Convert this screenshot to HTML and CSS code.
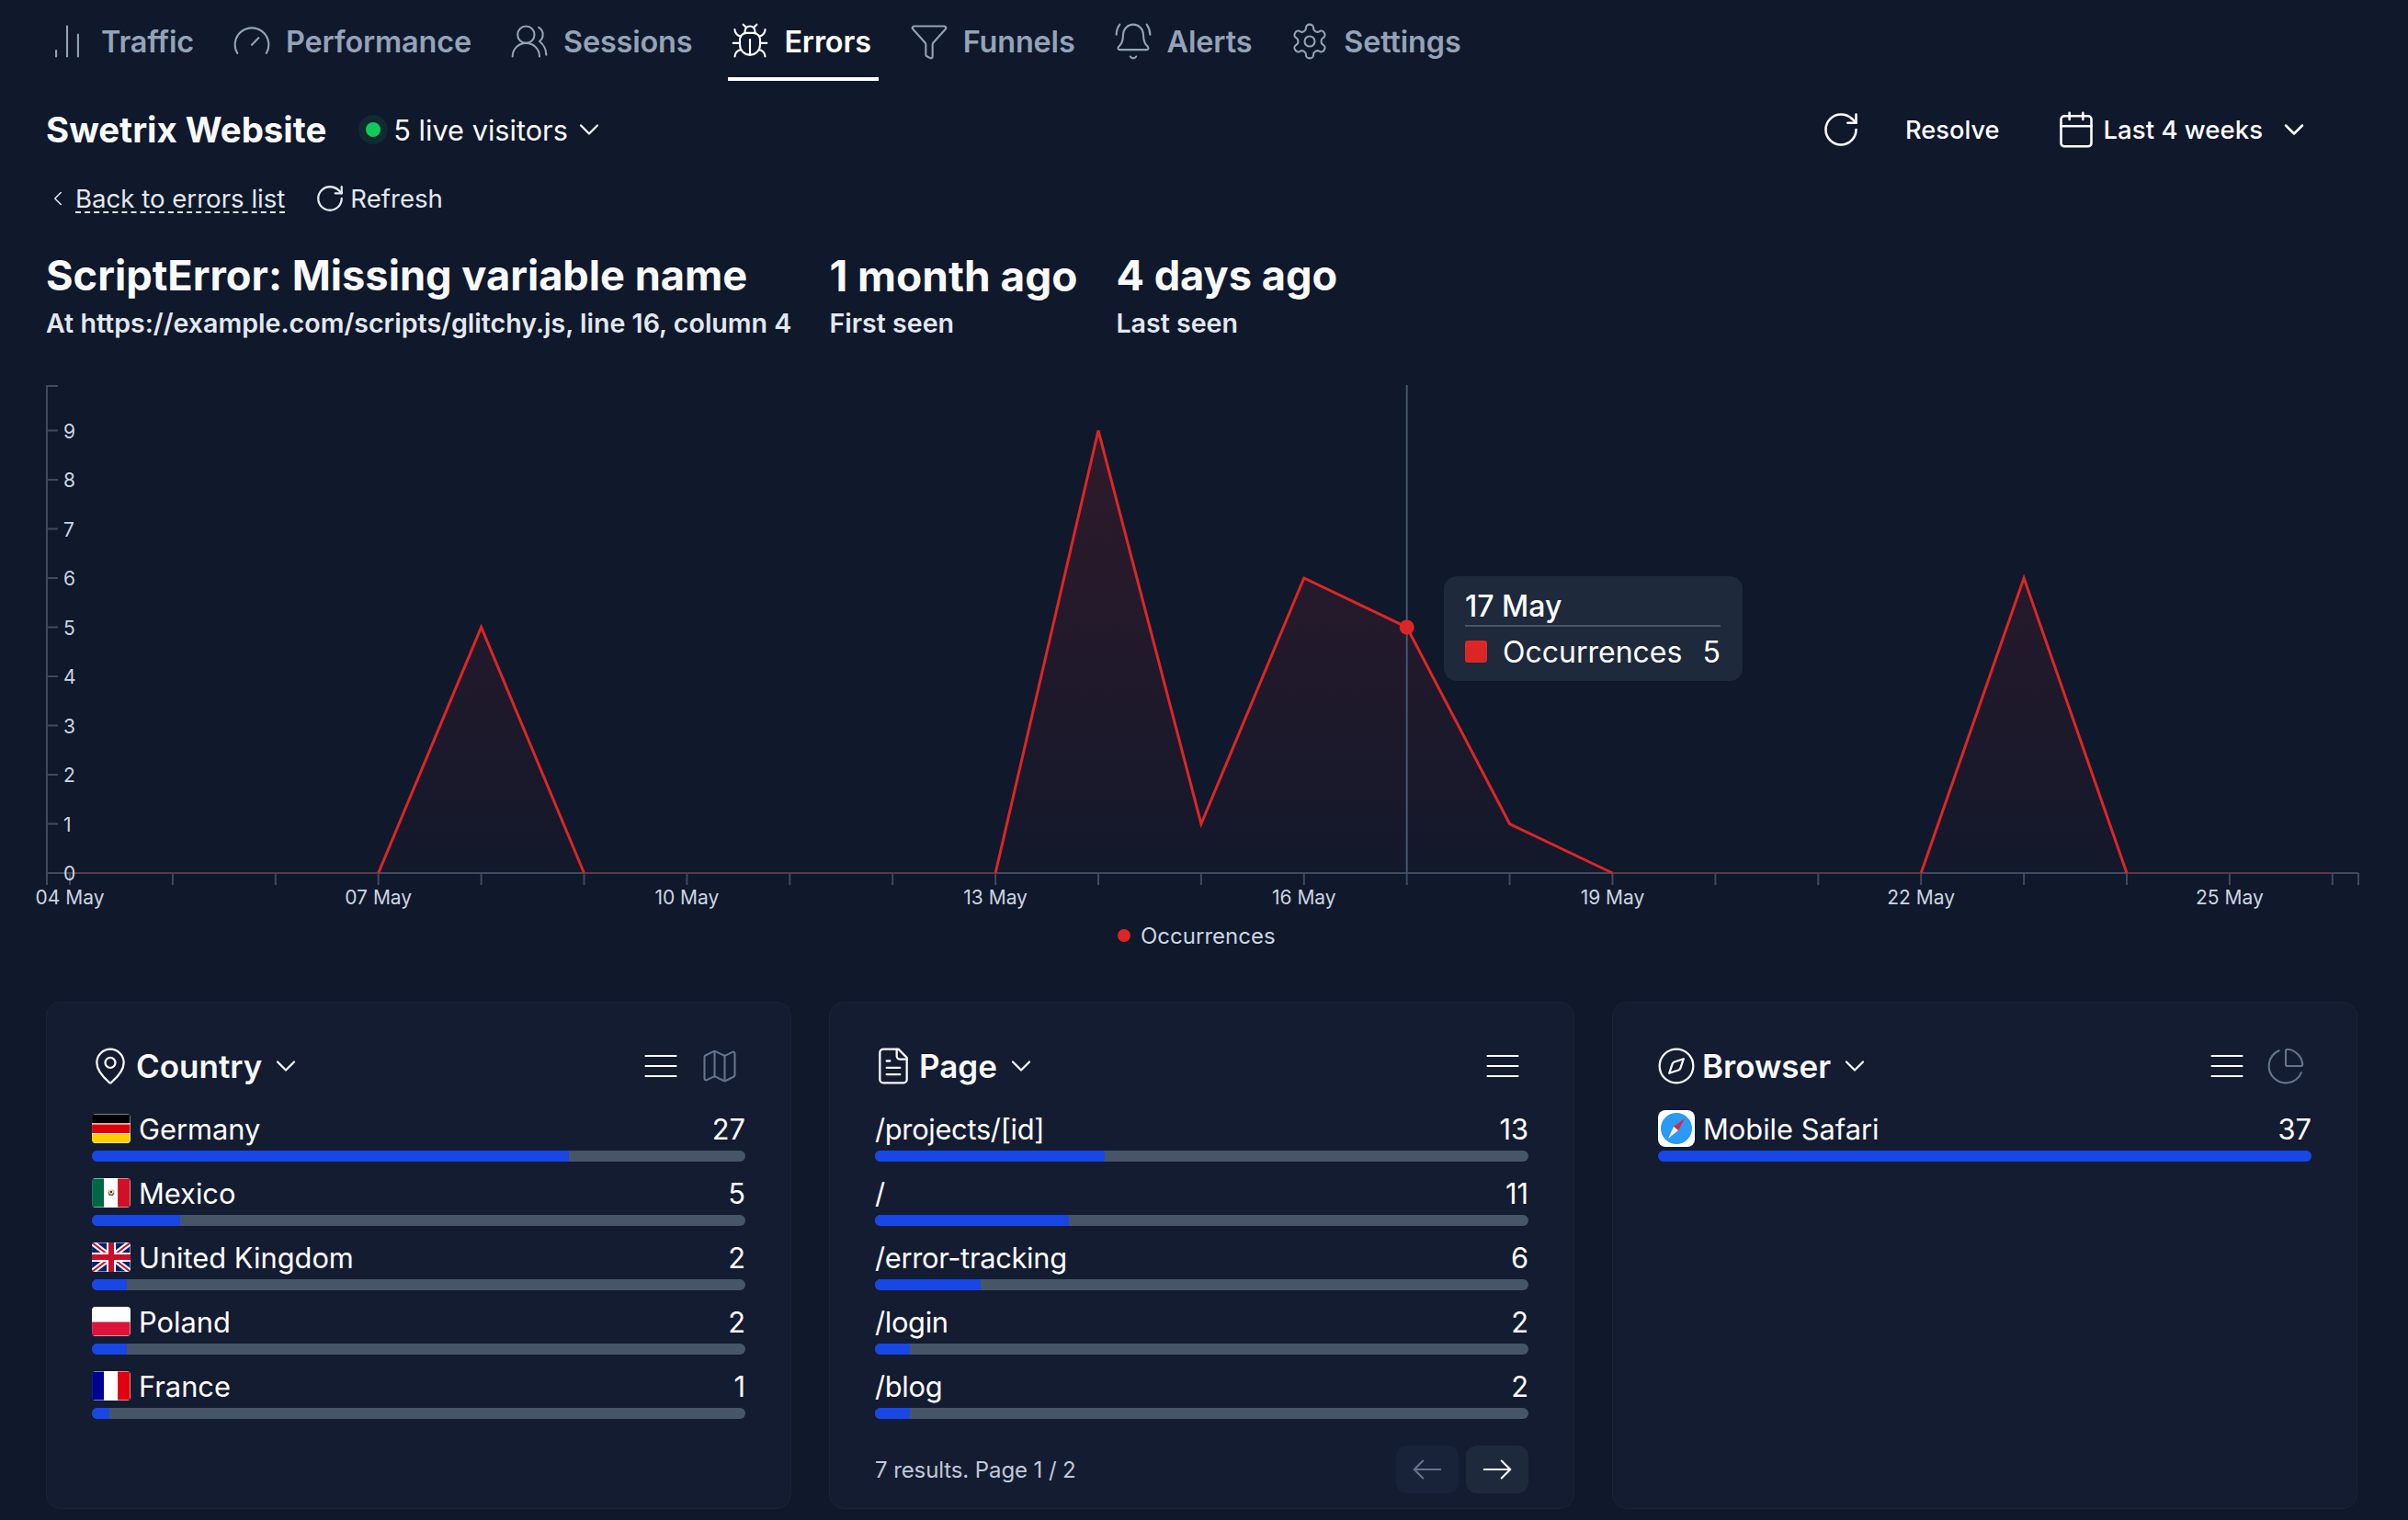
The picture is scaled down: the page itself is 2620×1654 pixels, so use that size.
FILE: index.html
```html
<!DOCTYPE html>
<html lang="en">
<head>
<meta charset="utf-8">
<title>Swetrix Errors</title>
<link rel="stylesheet" href="styles.css">
</head>
<body>
<div class="page">
  <nav class="tabs">
    <a class="tab"><svg class="tab-icon" viewBox="0 0 24 24"><path d="M5.500 21v-3.500M12 21V3M18.500 21V8"/></svg>Traffic</a>
    <a class="tab"><svg class="tab-icon" viewBox="0 0 24 24"><path d="m12 14 4-4"/><path d="M3.340 19a10 10 0 1 1 17.320 0"/></svg>Performance</a>
    <a class="tab"><svg class="tab-icon" viewBox="0 0 24 24"><path d="M18 21a8 8 0 0 0-16 0"/><circle cx="10" cy="8" r="5"/><path d="M22 20c0-3.370-2-6.500-4-8a5 5 0 0 0-.450-8.300"/></svg>Sessions</a>
    <a class="tab tab-active"><svg class="tab-icon" viewBox="0 0 24 24"><path d="M12 20v-9"/><path d="M14 7a4 4 0 0 1 4 4v3a6 6 0 0 1-12 0v-3a4 4 0 0 1 4-4z"/><path d="M14.120 3.880 16 2"/><path d="M21 21a4 4 0 0 0-3.810-4"/><path d="M21 5a4 4 0 0 1-3.550 3.970"/><path d="M22 13h-4"/><path d="M3 21a4 4 0 0 1 3.810-4"/><path d="M3 5a4 4 0 0 0 3.550 3.970"/><path d="M6 13H2"/><path d="m8 2 1.880 1.880"/><path d="M9 7.130V6a3 3 0 1 1 6 0v1.130"/></svg>Errors</a>
    <a class="tab"><svg class="tab-icon" viewBox="0 0 24 24"><path d="M10 20a1 1 0 0 0 .553.895l2 1A1 1 0 0 0 14 21v-7a2 2 0 0 1 .517-1.341L21.740 4.670A1 1 0 0 0 21 3H3a1 1 0 0 0-.742 1.670l7.225 7.989A2 2 0 0 1 10 14z"/></svg>Funnels</a>
    <a class="tab"><svg class="tab-icon" viewBox="0 0 24 24"><path d="M10.268 21a2 2 0 0 0 3.464 0"/><path d="M22 8c0-2.300-.8-4.300-2-6"/><path d="M3.262 15.326A1 1 0 0 0 4 17h16a1 1 0 0 0 .74-1.673C19.410 13.956 18 12.499 18 8A6 6 0 0 0 6 8c0 4.499-1.411 5.956-2.738 7.326"/><path d="M4 2C2.800 3.700 2 5.700 2 8"/></svg>Alerts</a>
    <a class="tab"><svg class="tab-icon" viewBox="0 0 24 24"><path d="M12.220 2h-.44a2 2 0 0 0-2 2v.18a2 2 0 0 1-1 1.730l-.43.25a2 2 0 0 1-2 0l-.15-.08a2 2 0 0 0-2.730.73l-.22.38a2 2 0 0 0 .73 2.730l.15.1a2 2 0 0 1 1 1.720v.51a2 2 0 0 1-1 1.740l-.15.09a2 2 0 0 0-.73 2.730l.22.38a2 2 0 0 0 2.730.73l.15-.08a2 2 0 0 1 2 0l.43.25a2 2 0 0 1 1 1.730V20a2 2 0 0 0 2 2h.44a2 2 0 0 0 2-2v-.18a2 2 0 0 1 1-1.730l.43-.25a2 2 0 0 1 2 0l.15.08a2 2 0 0 0 2.730-.73l.22-.39a2 2 0 0 0-.73-2.730l-.15-.08a2 2 0 0 1-1-1.740v-.5a2 2 0 0 1 1-1.740l.15-.09a2 2 0 0 0 .73-2.730l-.22-.38a2 2 0 0 0-2.730-.73l-.15.08a2 2 0 0 1-2 0l-.43-.25a2 2 0 0 1-1-1.730V4a2 2 0 0 0-2-2z"/><circle cx="12" cy="12" r="3"/></svg>Settings</a>
  </nav>

  <header class="topbar">
    <div class="topbar-left">
      <h1 class="project">Swetrix Website</h1>
      <span class="live-dot"><span class="live-core"></span></span>
      <span class="live-text">5 live visitors</span>
      <svg class="chev chev-live" viewBox="0 0 24 24"><path d="m6 9 6 6 6-6"/></svg>
    </div>
    <div class="topbar-right">
      <svg class="action-icon refresh-main" viewBox="0 0 24 24"><path d="M21 12a9 9 0 1 1-9-9c2.520 0 4.930 1 6.740 2.740L21 8"/><path d="M21 3v5h-5"/></svg>
      <span class="resolve">Resolve</span>
      <svg class="action-icon calendar" viewBox="0 0 24 24"><path d="M8 2v4M16 2v4"/><rect x="3" y="4" width="18" height="18" rx="2"/><path d="M3 10h18"/></svg>
      <span class="range">Last 4 weeks</span>
      <svg class="chev chev-range" viewBox="0 0 24 24"><path d="m6 9 6 6 6-6"/></svg>
    </div>
  </header>

  <div class="backrow">
    <svg class="back-chev" viewBox="0 0 24 24"><path d="m15 18-6-6 6-6"/></svg>
    <a class="back-link">Back to errors list</a>
    <svg class="refresh-small" viewBox="0 0 24 24"><path d="M21 12a9 9 0 1 1-9-9c2.520 0 4.930 1 6.740 2.740L21 8"/><path d="M21 3v5h-5"/></svg>
    <span class="refresh-label">Refresh</span>
  </div>

  <section class="summary">
    <div class="summary-item">
      <div class="summary-title">ScriptError: Missing variable name</div>
      <div class="summary-sub">At https://example.com/scripts/glitchy.js, line 16, column 4</div>
    </div>
    <div class="summary-item summary-item-first">
      <div class="summary-title">1 month ago</div>
      <div class="summary-sub">First seen</div>
    </div>
    <div class="summary-item">
      <div class="summary-title">4 days ago</div>
      <div class="summary-sub">Last seen</div>
    </div>
  </section>

  <section class="chart">
    <svg class="chart-svg" viewBox="0 410 2620 630">
      <defs>
        <linearGradient id="area" x1="0" y1="0" x2="0" y2="1">
          <stop offset="0" stop-color="#dc2626" stop-opacity=".15"/>
          <stop offset="1" stop-color="#dc2626" stop-opacity=".015"/>
        </linearGradient>
      </defs>
      <path class="axis" d="M63 420H51V950M51 950H63M51 896.500H63M51 843H63M51 789.500H63M51 736H63M51 682.500H63M51 629H63M51 575.500H63M51 522H63M51 468.500H63"/>
      <path class="axis" d="M76 950V963M51 950V963M187.900 950V963M299.800 950V963M411.700 950V963M523.600 950V963M635.500 950V963M747.400 950V963M859.300 950V963M971.200 950V963M1083.100 950V963M1195 950V963M1306.900 950V963M1418.800 950V963M1530.700 950V963M1642.600 950V963M1754.500 950V963M1866.400 950V963M1978.300 950V963M2090.200 950V963M2202.100 950V963M2314 950V963M2425.900 950V963M2537.800 950V963M2566 950V963"/>
      <path class="area" d="M411.700 950 523.600 682.500 635.500 950ZM1083.100 950 1195 468.500 1306.900 896.500 1418.800 629 1530.700 682.500 1642.600 896.500 1754.500 950ZM2090.200 950 2202.100 629 2314 950Z"/>
      <path class="axis" d="M51 950H2566"/>
      <path class="axis cursor" d="M1530.700 419V950"/>
      <path class="baseline" d="M76 950H411.700M635.500 950H1083.100M1754.500 950H2090.200M2314 950H2538"/>
      <path class="series" d="M411.700 950 523.600 682.500 635.500 950M1083.100 950 1195 468.500 1306.900 896.500 1418.800 629 1530.700 682.500 1642.600 896.500 1754.500 950M2090.200 950 2202.100 629 2314 950"/>
      <circle class="marker" cx="1530.700" cy="682.500" r="8"/>
      <g class="ylabels">
        <text x="69" y="476.500">9</text><text x="69" y="530">8</text><text x="69" y="583.500">7</text><text x="69" y="637">6</text><text x="69" y="690.500">5</text><text x="69" y="744">4</text><text x="69" y="797.500">3</text><text x="69" y="851">2</text><text x="69" y="904.500">1</text><text x="69" y="958">0</text>
      </g>
      <g class="xlabels">
        <text x="76" y="984">04 May</text><text x="411.700" y="984">07 May</text><text x="747.400" y="984">10 May</text><text x="1083.100" y="984">13 May</text><text x="1418.800" y="984">16 May</text><text x="1754.500" y="984">19 May</text><text x="2090.200" y="984">22 May</text><text x="2425.900" y="984">25 May</text>
      </g>
      <circle class="marker" cx="1223" cy="1018" r="7"/>
      <text class="legend" x="1241" y="1027">Occurrences</text>
    </svg>
    <div class="tooltip">
      <div class="tooltip-title">17 May</div>
      <div class="tooltip-row">
        <span class="swatch"></span>
        <span class="tooltip-name">Occurrences</span>
        <span class="tooltip-value">5</span>
      </div>
    </div>
  </section>

  <section class="panels">
    <article class="panel">
      <div class="panel-head">
        <svg class="head-icon" viewBox="0 0 24 24"><path d="M20 10c0 4.993-5.539 10.193-7.399 11.799a1 1 0 0 1-1.202 0C9.539 20.193 4 14.993 4 10a8 8 0 0 1 16 0"/><circle cx="12" cy="10" r="3"/></svg>
        <h2 class="panel-title">Country</h2>
        <svg class="chev chev-head" viewBox="0 0 24 24"><path d="m6 9 6 6 6-6"/></svg>
        <div class="panel-tools">
          <span class="tool"><svg class="tool-icon" viewBox="0 0 24 24"><path d="M3 6h18M3 12h18M3 18h18"/></svg></span>
          <span class="tool tool-muted"><svg class="tool-icon" viewBox="0 0 24 24"><path d="M14.106 5.553a2 2 0 0 0 1.788 0l3.659-1.830A1 1 0 0 1 21 4.619v12.764a1 1 0 0 1-.553.894l-4.553 2.277a2 2 0 0 1-1.788 0l-4.212-2.106a2 2 0 0 0-1.788 0l-3.659 1.830A1 1 0 0 1 3 19.381V6.618a1 1 0 0 1 .553-.894l4.553-2.277a2 2 0 0 1 1.788 0z"/><path d="M15 5.764v15"/><path d="M9 3.236v15"/></svg></span>
        </div>
      </div>
      <ul class="rows">
        <li class="row"><div class="row-line"><svg class="flag" viewBox="0 0 42 32"><rect width="42" height="11" fill="#000"/><rect y="11" width="42" height="10.500" fill="#dd0000"/><rect y="21.500" width="42" height="10.500" fill="#ffce00"/></svg><span class="row-name">Germany</span><span class="row-num">27</span></div><div class="bar"><div class="bar-fill" style="width:73%"></div></div></li>
        <li class="row"><div class="row-line"><svg class="flag" viewBox="0 0 42 32"><rect width="14" height="32" fill="#006847"/><rect x="14" width="14" height="32" fill="#fff"/><rect x="28" width="14" height="32" fill="#ce1126"/><circle cx="21" cy="16" r="4" fill="#8c6d46"/><circle cx="21" cy="15" r="2" fill="#4a3a22"/></svg><span class="row-name">Mexico</span><span class="row-num">5</span></div><div class="bar"><div class="bar-fill" style="width:13.5%"></div></div></li>
        <li class="row"><div class="row-line"><svg class="flag" viewBox="0 0 42 32"><rect width="42" height="32" fill="#012169"/><path d="M0 0 42 32M42 0 0 32" stroke="#fff" stroke-width="6"/><path d="M0 0 42 32M42 0 0 32" stroke="#c8102e" stroke-width="2"/><path d="M21 0V32M0 16H42" stroke="#fff" stroke-width="10"/><path d="M21 0V32M0 16H42" stroke="#c8102e" stroke-width="6"/></svg><span class="row-name">United Kingdom</span><span class="row-num">2</span></div><div class="bar"><div class="bar-fill" style="width:5.4%"></div></div></li>
        <li class="row"><div class="row-line"><svg class="flag" viewBox="0 0 42 32"><rect width="42" height="16" fill="#fff"/><rect y="16" width="42" height="16" fill="#dc143c"/></svg><span class="row-name">Poland</span><span class="row-num">2</span></div><div class="bar"><div class="bar-fill" style="width:5.4%"></div></div></li>
        <li class="row"><div class="row-line"><svg class="flag" viewBox="0 0 42 32"><rect width="14" height="32" fill="#000091"/><rect x="14" width="14" height="32" fill="#fff"/><rect x="28" width="14" height="32" fill="#e1000f"/></svg><span class="row-name">France</span><span class="row-num">1</span></div><div class="bar"><div class="bar-fill" style="width:2.7%"></div></div></li>
      </ul>
    </article>

    <article class="panel">
      <div class="panel-head">
        <svg class="head-icon" viewBox="0 0 24 24"><path d="M15 2H6a2 2 0 0 0-2 2v16a2 2 0 0 0 2 2h12a2 2 0 0 0 2-2V7Z"/><path d="M14 2v4a2 2 0 0 0 2 2h4"/><path d="M10 9H8"/><path d="M16 13H8"/><path d="M16 17H8"/></svg>
        <h2 class="panel-title">Page</h2>
        <svg class="chev chev-head" viewBox="0 0 24 24"><path d="m6 9 6 6 6-6"/></svg>
        <div class="panel-tools">
          <span class="tool"><svg class="tool-icon" viewBox="0 0 24 24"><path d="M3 6h18M3 12h18M3 18h18"/></svg></span>
        </div>
      </div>
      <ul class="rows">
        <li class="row"><div class="row-line"><span class="row-name row-name-plain">/projects/[id]</span><span class="row-num">13</span></div><div class="bar"><div class="bar-fill" style="width:35.1%"></div></div></li>
        <li class="row"><div class="row-line"><span class="row-name row-name-plain">/</span><span class="row-num">11</span></div><div class="bar"><div class="bar-fill" style="width:29.7%"></div></div></li>
        <li class="row"><div class="row-line"><span class="row-name row-name-plain">/error-tracking</span><span class="row-num">6</span></div><div class="bar"><div class="bar-fill" style="width:16.2%"></div></div></li>
        <li class="row"><div class="row-line"><span class="row-name row-name-plain">/login</span><span class="row-num">2</span></div><div class="bar"><div class="bar-fill" style="width:5.4%"></div></div></li>
        <li class="row"><div class="row-line"><span class="row-name row-name-plain">/blog</span><span class="row-num">2</span></div><div class="bar"><div class="bar-fill" style="width:5.4%"></div></div></li>
      </ul>
      <div class="panel-foot">
        <span class="results">7 results. Page 1 / 2</span>
        <div class="pager">
          <span class="page-btn page-btn-off"><svg class="page-icon" viewBox="0 0 24 24"><path d="M21 12H3"/><path d="m9 6-6 6 6 6"/></svg></span>
          <span class="page-btn"><svg class="page-icon" viewBox="0 0 24 24"><path d="M3 12h18"/><path d="m15 6 6 6-6 6"/></svg></span>
        </div>
      </div>
    </article>

    <article class="panel">
      <div class="panel-head">
        <svg class="head-icon" viewBox="0 0 24 24"><path d="m16.240 7.760-1.804 5.411a2 2 0 0 1-1.265 1.265L7.760 16.240l1.804-5.411a2 2 0 0 1 1.265-1.265z"/><circle cx="12" cy="12" r="10"/></svg>
        <h2 class="panel-title">Browser</h2>
        <svg class="chev chev-head" viewBox="0 0 24 24"><path d="m6 9 6 6 6-6"/></svg>
        <div class="panel-tools">
          <span class="tool"><svg class="tool-icon" viewBox="0 0 24 24"><path d="M3 6h18M3 12h18M3 18h18"/></svg></span>
          <span class="tool tool-muted"><svg class="tool-icon" viewBox="0 0 24 24"><path d="M21 12c.552 0 1.005-.449.950-.998a10 10 0 0 0-8.953-8.951c-.55-.055-.998.398-.998.950v8a1 1 0 0 0 1 1z"/><path d="M21.210 15.890A10 10 0 1 1 8 2.830"/></svg></span>
        </div>
      </div>
      <ul class="rows">
        <li class="row"><div class="row-line"><svg class="app-icon" viewBox="0 0 40 40"><rect width="40" height="40" rx="8" fill="#fff"/><circle cx="20" cy="20" r="17" fill="#2b9af3"/><path d="M29 9 17 18 22 22Z" fill="#e8203a"/><path d="M11 31 17 18 22 22Z" fill="#f4f6fa"/></svg><span class="row-name">Mobile Safari</span><span class="row-num">37</span></div><div class="bar"><div class="bar-fill" style="width:100%"></div></div></li>
      </ul>
    </article>
  </section>
</div>
</body>
</html>
```
FILE: styles.css
```css
* { box-sizing: border-box; }
html, body { margin: 0; padding: 0; }
body {
  background: #10182b;
  color: #f8fafc;
  font-family: Inter, "Liberation Sans", sans-serif;
  width: 2620px;
  height: 1654px;
  overflow: hidden;
}
h1, h2, ul { margin: 0; padding: 0; }
ul { list-style: none; }
svg { display: block; flex: none; fill: none; stroke: currentColor; stroke-linecap: round; stroke-linejoin: round; }

.page { padding: 0 54px 0 50px; }

/* Tabs */
.tabs { display: flex; gap: 31px; height: 88px; margin-left: -1px; }
.tab {
  display: flex;
  align-items: center;
  height: 88px;
  padding: 6px 8px 0 2px;
  border-bottom: 4px solid transparent;
  color: #94a3b8;
  font-size: 32.4px;
  font-weight: 600;
  letter-spacing: -.15px;
}
.tab-active { color: #fff; border-bottom-color: #fff; }
.tab-icon { width: 44px; height: 44px; margin-right: 15px; stroke-width: 1.15; }

/* Top bar */
.topbar { display: flex; justify-content: space-between; align-items: center; height: 48px; margin-top: 29px; }
.topbar-left, .topbar-right { display: flex; align-items: center; }
.project { font-size: 38.4px; font-weight: 700; }
.live-dot { display: flex; align-items: center; justify-content: center; width: 32px; height: 32px; margin-left: 35px; border-radius: 50%; background: rgba(34, 197, 94, .1); }
.live-core { width: 16px; height: 16px; border-radius: 50%; background: #0fcb58; }
.live-text { margin-left: 6px; font-size: 30.7px; }
.chev { stroke-width: 1.5; }
.chev-live { width: 36px; height: 36px; margin-left: 5px; }
.topbar-right { padding-right: 52px; color: #fff; }
.action-icon { width: 44px; height: 44px; stroke-width: 1.4; }
.resolve { margin-left: 48px; font-size: 27.2px; font-weight: 450; }
.calendar { margin-left: 61px; }
.range { margin-left: 8px; font-size: 27.6px; font-weight: 450; }
.chev-range { width: 36px; height: 36px; margin-left: 16px; stroke-width: 1.7; }

/* Back row */
.backrow { display: flex; align-items: center; height: 40px; margin-top: 31px; color: #e2e8f0; font-size: 27.6px; }
.back-chev { width: 26px; height: 26px; stroke-width: 1.4; }
.back-link { margin: 3px 0 0 6px; border-bottom: 2px dashed #e2e8f0; line-height: 27px; }
.refresh-small { width: 34px; height: 34px; margin-left: 32px; stroke-width: 1.6; }
.refresh-label { margin-left: 5px; }

/* Summary */
.summary { display: flex; gap: 41px; margin-top: 35px; }
.summary-item-first { min-width: 271px; }
.summary-item-first .summary-title { font-size: 46px; }
.summary-title { font-size: 45.2px; font-weight: 700; line-height: 58px; white-space: nowrap; }
.summary-sub { margin-top: 5px; color: #e2e8f0; font-size: 28.6px; font-weight: 600; line-height: 36px; white-space: nowrap; }

/* Chart */
.chart { position: relative; height: 630px; margin: 40px -54px 0 -50px; }
.chart-svg { width: 2620px; height: 630px; }
.axis { stroke: #3d4a60; stroke-width: 2; stroke-linecap: butt; }
.cursor { stroke: #47556b; }
.area { fill: url(#area); stroke: none; }
.baseline { stroke: #7a2631; stroke-width: 1; }
.series { stroke: #dc2626; stroke-width: 3; stroke-linecap: butt; stroke-linejoin: miter; }
.marker { fill: #dc2626; stroke: none; }
.ylabels text, .xlabels text { fill: #cbd5e1; stroke: none; font-size: 21px; }
.xlabels text { text-anchor: middle; }
.legend { fill: #cbd5e1; stroke: none; font-size: 24px; }
.tooltip {
  position: absolute;
  left: 1571px;
  top: 217px;
  width: 325px;
  height: 114px;
  padding: 13px 24px 0 23px;
  border-radius: 14px;
  background: #1e293b;
  color: #fff;
}
.tooltip-title { height: 42px; border-bottom: 2px solid #475569; font-size: 32px; font-weight: 500; line-height: 40px; }
.tooltip-row { display: flex; align-items: center; height: 54px; font-size: 32px; }
.swatch { width: 24px; height: 24px; border-radius: 3px; background: #dc2626; }
.tooltip-name { margin-left: 17px; }
.tooltip-value { margin-left: auto; }

/* Panels */
.panels { display: grid; grid-template-columns: repeat(3, 811px); gap: 41px; margin-top: 50px; }
.panel { height: 552px; padding: 0 49px; border: 1px solid #1a2339; border-radius: 16px; background: #141c32; display: flex; flex-direction: column; }
.panel-head { display: flex; align-items: center; height: 44px; margin-top: 47px; }
.head-icon { width: 44px; height: 44px; margin-left: -2px; stroke-width: 1.25; }
.panel-title { margin-left: 6px; font-size: 35px; font-weight: 600; }
.chev-head { width: 36px; height: 36px; margin-left: 8px; stroke-width: 1.5; }
.panel-tools { display: flex; gap: 8px; margin-left: auto; }
.tool { display: flex; justify-content: center; width: 56px; color: #fff; }
.tool-muted { color: #64748b; }
.tool-icon { width: 44px; height: 44px; stroke-width: 1.15; }

.rows { display: flex; flex-direction: column; gap: 12px; margin-top: 24px; }
.row { display: flex; flex-direction: column; height: 58px; }
.row-line { display: flex; align-items: center; height: 46px; padding-bottom: 2px; font-size: 30.8px; color: #fff; }
.flag { width: 42px; height: 32px; border-radius: 4px; }
.app-icon { width: 40px; height: 40px; stroke: none; }
.row-name { margin-left: 9px; }
.row-name-plain { margin-left: 0; letter-spacing: -.3px; }
.row-num { margin-left: auto; }
.bar { height: 12px; border-radius: 6px; background: #475569; overflow: hidden; }
.bar-fill { height: 100%; background: #1747e5; }

.panel-foot { display: flex; align-items: center; justify-content: space-between; margin-top: 29px; }
.results { color: #c0c9d6; font-size: 24px; letter-spacing: -.1px; }
.pager { display: flex; gap: 8px; }
.page-btn { display: flex; align-items: center; justify-content: center; width: 68px; height: 52px; border-radius: 12px; background: #1e293b; color: #fff; }
.page-btn-off { background: #18233a; color: #64748b; }
.page-icon { width: 38px; height: 38px; stroke-width: 1.3; }
```
